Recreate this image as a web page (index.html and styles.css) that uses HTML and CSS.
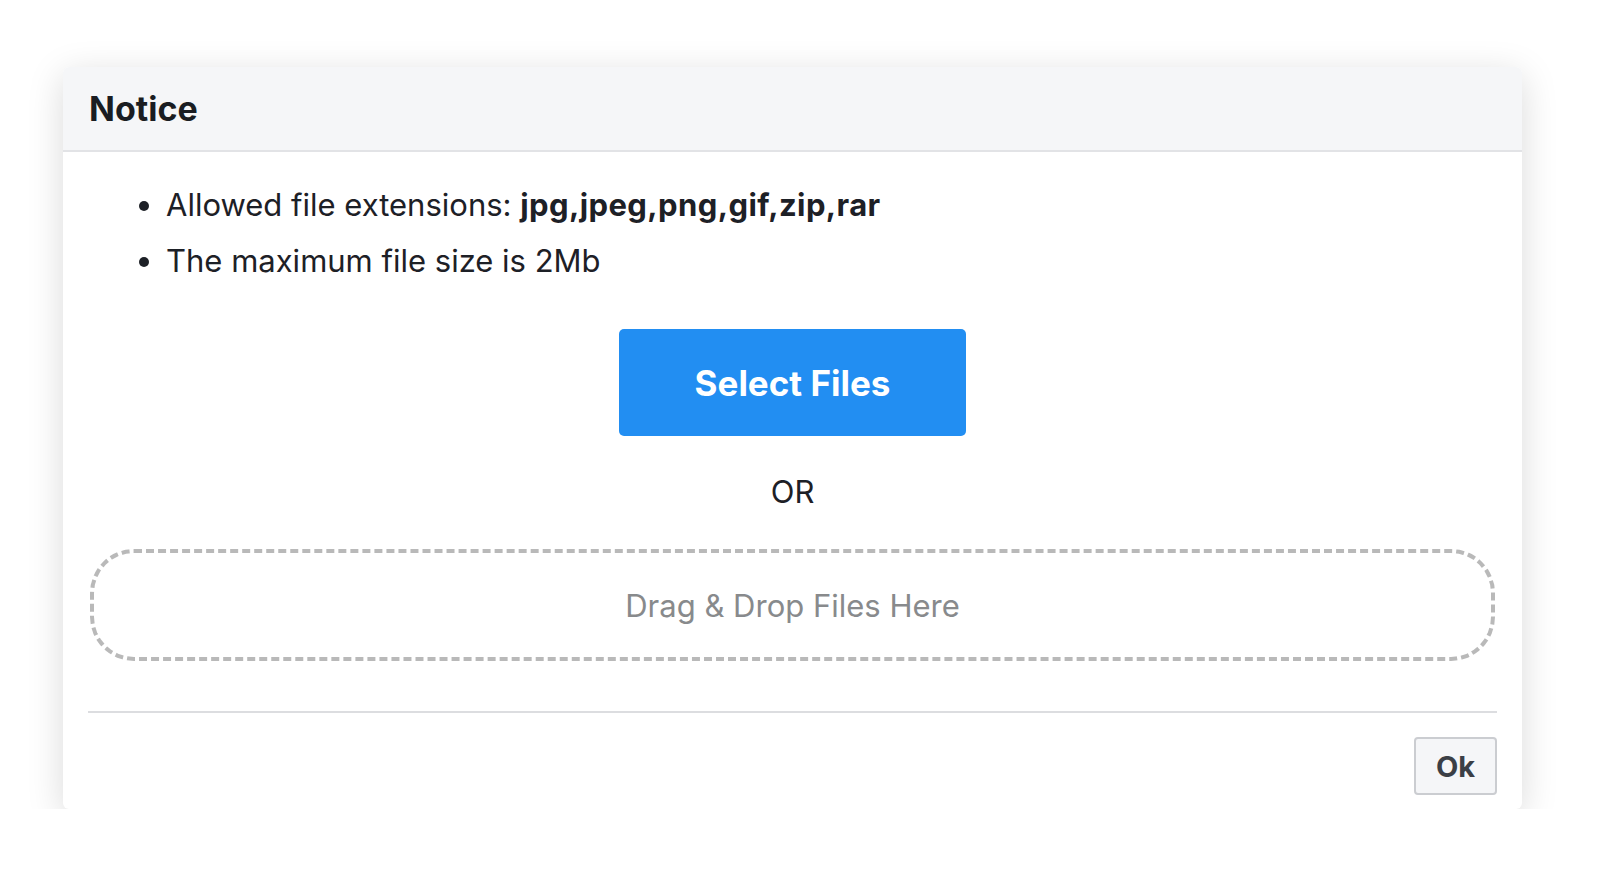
FILE: index.html
```html
<!DOCTYPE html>
<html lang="en">
<head>
  <meta charset="UTF-8">
  <meta name="viewport" content="width=device-width, initial-scale=1.0">
  <title>Notice</title>
  <link rel="stylesheet" href="styles.css">
</head>
<body>

  <div class="modal">
    <div class="modal-header">
      <h2>Notice</h2>
    </div>

    <div class="modal-body">
      <ul class="rules">
        <li>Allowed file extensions: <b>jpg,jpeg,png,gif,zip,rar</b></li>
        <li>The maximum file size is 2Mb</li>
      </ul>

      <div class="select-row">
        <button class="select-btn">Select Files</button>
      </div>

      <p class="or">OR</p>

      <div class="dropzone">Drag &amp; Drop Files Here</div>
    </div>

    <div class="modal-footer">
      <button class="ok-btn">Ok</button>
    </div>
  </div>

</body>
</html>
```

FILE: styles.css
```css
body {
  margin: 0;
  padding: 67px 0 0 63px;
  background-color: #fff;
  font-family: Inter, "Liberation Sans", sans-serif;
  color: #1d2026;
}
.modal {
  width: 1459px;
  background-color: #fff;
  border-radius: 6px;
  box-shadow: 0 8px 36px rgba(0, 0, 0, 0.15);
  overflow: hidden;
}
.modal-header {
  height: 83px;
  padding: 0 26px;
  display: flex;
  align-items: center;
  background-color: #f5f6f8;
  border-bottom: 2px solid #e2e3e6;
}
.modal-header h2 {
  margin: 0;
  font-size: 34px;
  font-weight: 700;
  color: #1a1d22;
}
.modal-body {
  padding: 25px 27px 0 27px;
}
.rules {
  margin: 0;
  padding-left: 76px;
  font-size: 31px;
  line-height: 56px;
}
.rules b {
  font-weight: 700;
  letter-spacing: 0.4px;
}
.select-row {
  margin-top: 40px;
  display: flex;
  justify-content: center;
}
.select-btn {
  width: 347px;
  height: 107px;
  border: none;
  border-radius: 5px;
  background-color: #228ef2;
  color: #fff;
  font-family: inherit;
  font-size: 35px;
  font-weight: 700;
  cursor: pointer;
}
.or {
  margin: 36px 0 0 0;
  text-align: center;
  font-size: 31px;
  line-height: 40px;
}
.dropzone {
  margin-top: 37px;
  height: 104px;
  border: 4px dashed #b9b9b9;
  border-radius: 44px;
  display: flex;
  align-items: center;
  justify-content: center;
  font-size: 31px;
  color: #888a8c;
}
.modal-footer {
  margin: 50px 25px 0 25px;
  padding: 24px 0 14px 0;
  border-top: 2px solid #dcdde0;
  display: flex;
  justify-content: flex-end;
}
.ok-btn {
  width: 83px;
  height: 58px;
  border: 2px solid #cbcdd1;
  border-radius: 4px;
  background-color: #f5f6f8;
  color: #3b3f46;
  font-family: inherit;
  font-size: 29px;
  font-weight: 700;
  cursor: pointer;
}
```
